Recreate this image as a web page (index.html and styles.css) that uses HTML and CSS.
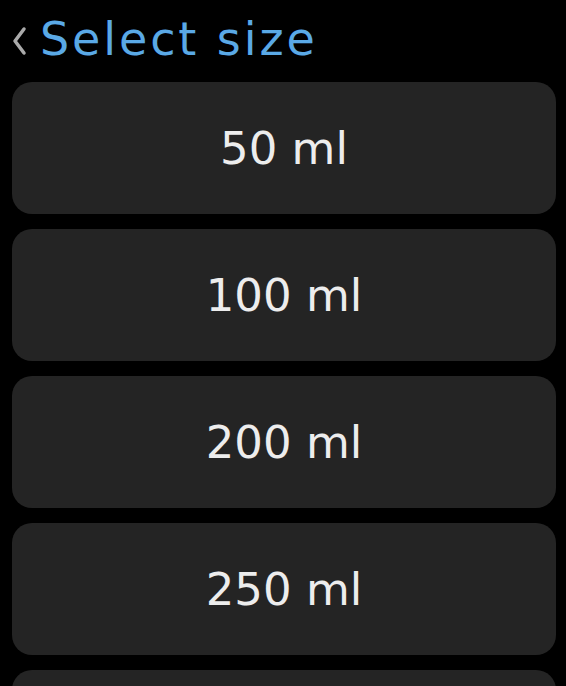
FILE: index.html
```html
<!DOCTYPE html>
<html>
<head>
<meta charset="UTF-8">
<title>Select size</title>
<link rel="stylesheet" href="styles.css">
</head>
<body>
  <div class="header">
    <svg class="back" width="16" height="30" viewBox="0 0 16 30">
      <polyline points="13,3 4,15 13,27" fill="none" stroke="#aaaaaa" stroke-width="3.5" stroke-linecap="round" stroke-linejoin="round"/>
    </svg>
    <span class="title">Select size</span>
  </div>

  <div class="list">
    <div class="item">50 ml</div>
    <div class="item">100 ml</div>
    <div class="item">200 ml</div>
    <div class="item">250 ml</div>
    <div class="item">500 ml</div>
  </div>
</body>
</html>
```

FILE: styles.css
```css
* {
  margin: 0;
  padding: 0;
  box-sizing: border-box;
}

html, body {
  height: 100%;
}

body {
  background: #000;
  font-family: "DejaVu Sans", Inter, sans-serif;
  overflow: hidden;
}

.header {
  height: 82px;
  display: flex;
  align-items: center;
  padding-left: 11px;
  padding-bottom: 4px;
}

.back {
  margin-right: 13px;
  margin-top: 4px;
}

.title {
  color: #5aa9e6;
  font-size: 46px;
  letter-spacing: 2.9px;
}

.list {
  display: flex;
  flex-direction: column;
  gap: 15px;
  padding: 0 10px 0 12px;
}

.item {
  height: 132px;
  flex-shrink: 0;
  background: #242424;
  border-radius: 20px;
  display: flex;
  align-items: center;
  justify-content: center;
  color: #ededed;
  font-size: 45px;
}
```
